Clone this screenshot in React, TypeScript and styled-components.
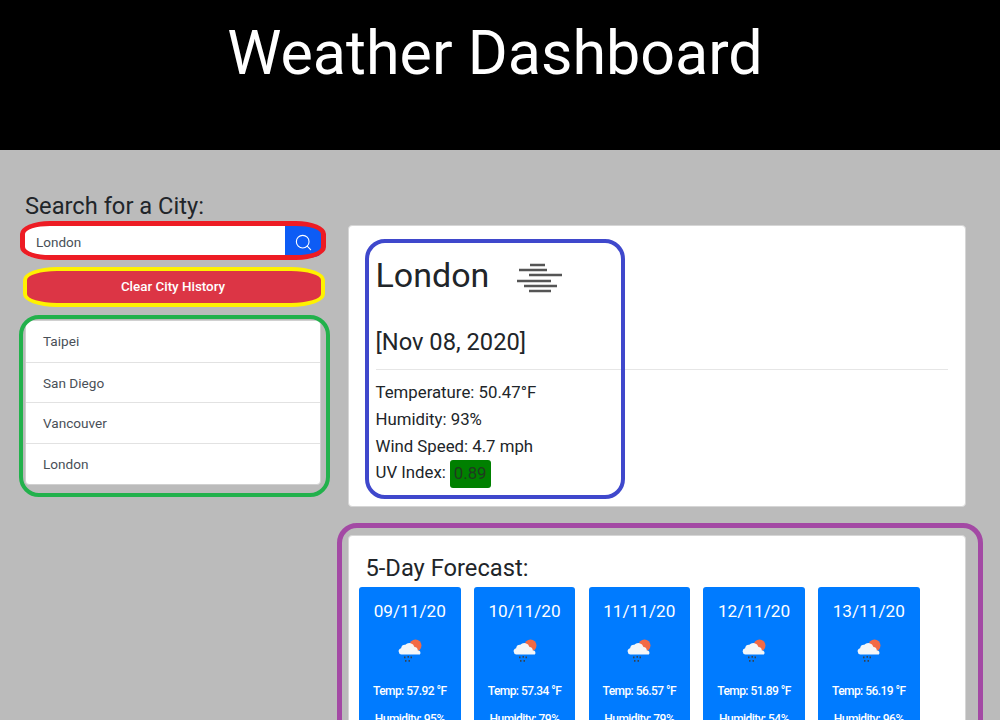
import React from "react";
import styled, { createGlobalStyle } from "styled-components";
import { Search } from "lucide-react";

const Global = createGlobalStyle`
  html, body { margin: 0; padding: 0; background: #bbbbbb; height: 720px; overflow: hidden; }
  body { font-family: Roboto, "Liberation Sans", sans-serif; color: #212529; }
  * { box-sizing: border-box; }
`;

const Header = styled.header`
  height: 150px;
  background: #000;
  color: #fff;
  text-align: center;
  padding: 16px 10px 0 0;
`;
const Title = styled.h1`
  margin: 0;
  font-size: 61px;
  line-height: 74px;
  font-weight: 400;
`;
const Main = styled.main`
  display: flex;
  height: 570px;
  overflow: hidden;
  padding: 0 34px 0 19px;
`;
const Sidebar = styled.aside`
  width: 302px;
  margin-right: 27px;
  padding: 42px 0 0 6px;
  display: flex;
  flex-direction: column;
`;
const SearchLabel = styled.h2`
  margin: 0;
  font-size: 23.7px;
  line-height: 28px;
  font-weight: 400;
  color: #212529;
`;
const Ring = styled.div<{ $color: string; $t: number; $r: number; $b: number; $l: number; $w: number; $radius: string }>`
  position: relative;
  &::after {
    content: "";
    position: absolute;
    top: ${(p) => -p.$t}px;
    right: ${(p) => -p.$r}px;
    bottom: ${(p) => -p.$b}px;
    left: ${(p) => -p.$l}px;
    border: ${(p) => p.$w}px solid ${(p) => p.$color};
    border-radius: ${(p) => p.$radius};
    pointer-events: none;
  }
`;
const SearchRing = styled(Ring)`
  margin-top: 6px;
  height: 32px;
`;
const SearchClip = styled.div`
  height: 100%;
  display: flex;
  overflow: hidden;
  border-radius: 14px / 5px;
`;
const SearchInput = styled.div`
  flex: 1;
  background: #fff;
  font-size: 13.5px;
  line-height: 32px;
  padding-left: 11px;
  color: #495057;
`;
const SearchButton = styled.div`
  width: 36px;
  background: #0d5cf5;
  color: #fff;
  display: flex;
  align-items: center;
  justify-content: center;
`;
const ClearRing = styled(Ring)`
  margin: 13px 0 0 2px;
  width: 295px;
  height: 32px;
`;
const ClearButton = styled.div`
  height: 100%;
  background: #dc3545;
  border-radius: 22px / 7px;
  color: #fff;
  font-size: 13.4px;
  font-weight: 500;
  line-height: 32px;
  text-align: center;
  padding-right: 3px;
`;
const ListRing = styled(Ring)`
  margin-top: 17px;
`;
const CityList = styled.ul`
  margin: 0;
  padding: 0 0 1px;
  list-style: none;
  background: #fff;
  border: 1px solid #d0d0d0;
  border-radius: 4px;
  overflow: hidden;
`;
const CityItem = styled.li`
  height: 40.5px;
  padding: 0 17px;
  font-size: 13.6px;
  line-height: 40px;
  color: #495057;
  & + & { border-top: 1px solid #e2e2e2; }
`;
const Content = styled.section`
  flex: 1;
  padding-top: 75px;
  display: flex;
  flex-direction: column;
  gap: 28px;
`;
const Card = styled.div`
  background: #fff;
  border: 1px solid #d6d6d6;
  border-radius: 4px;
`;
const TodayCard = styled(Card)`
  flex: none;
  height: 282px;
  padding: 14px 17px 0 26.5px;
`;
const TodayRing = styled(Ring)`
  display: flex;
  flex-direction: column;
`;
const CityRow = styled.div`
  display: flex;
  align-items: center;
  height: 70px;
`;
const CityName = styled.h2`
  margin: 0;
  font-size: 34px;
  line-height: 70px;
  font-weight: 400;
  color: #212529;
`;
const FogIcon = styled.svg`
  margin-left: 28px;
  margin-top: 6px;
`;
const DateLine = styled.div`
  font-size: 23.7px;
  line-height: 30px;
  margin-top: 17px;
  padding-bottom: 12px;
  border-bottom: 1px solid #e6e6e6;
`;
const Stats = styled.div`
  padding-top: 9px;
`;
const Stat = styled.p`
  margin: 0;
  height: 26.8px;
  font-size: 16.8px;
  line-height: 26.8px;
  color: #212529;
`;
const UvBadge = styled.span`
  display: inline-block;
  margin-left: 4px;
  padding: 0 4px;
  height: 28px;
  background: #008000;
  border-radius: 3px;
  color: #1f3b1f;
  line-height: 27px;
  vertical-align: -1px;
`;
const ForecastRing = styled(Ring)`
  flex: none;
`;
const ForecastCard = styled(Card)`
  height: 300px;
  padding: 18px 10px 0;
`;
const ForecastTitle = styled.h3`
  margin: 0 0 5px 6.5px;
  font-size: 23.7px;
  line-height: 28px;
  font-weight: 400;
`;
const Days = styled.div`
  display: flex;
  gap: 13.25px;
`;
const Day = styled.div`
  width: 101.5px;
  height: 220px;
  background: #007bff;
  border-radius: 3px;
  color: #fff;
  text-align: center;
  padding-top: 13px;
`;
const DayDate = styled.div`
  font-size: 17.2px;
  line-height: 22px;
`;
const WeatherIcon = styled.svg`
  display: block;
  margin: 17px auto 0;
`;
const DayText = styled.div`
  font-size: 12px;
  letter-spacing: -0.55px;
  font-weight: 500;
  line-height: 16px;
  margin-top: 20px;
  & + & { margin-top: 12px; }
`;

const cities = ["Taipei", "San Diego", "Vancouver", "London"];
const days = [
  ["09/11/20", "57.92", "95"],
  ["10/11/20", "57.34", "79"],
  ["11/11/20", "56.57", "79"],
  ["12/11/20", "51.89", "54"],
  ["13/11/20", "56.19", "96"],
];

const Fog = () => (
  <FogIcon width="46" height="30" viewBox="0 0 46 30" fill="none" stroke="#555" strokeWidth="2.4">
    <path d="M13 2h15M2 7h28M12 12h33M0 18h34M7 23h33M12 28h22" />
  </FogIcon>
);
const RainCloud = () => (
  <WeatherIcon width="24" height="24" viewBox="0 0 24 24">
    <circle cx="17.5" cy="6.5" r="6" fill="#f26a45" />
    <path d="M3.500 15.500a3.200 3.200 0 0 1-.4-6.300 4 4 0 0 1 4.200-3.400 5.400 5.400 0 0 1 9.200 2.200 3.600 3.600 0 0 1 3.300 3.600 2.300 2.300 0 0 1 2 3.900z" fill="#f4f6f8" />
    <path d="M6 17.500h1.500v1.800H6zM9.500 17h1.500v1.800H9.500zM12.500 17.500H14v1.800h-1.500zM7 21h1.500v1.800H7zM10.500 21H12v1.800h-1.500z" fill="#37424d" />
  </WeatherIcon>
);

export default function App() {
  return (
    <>
      <Global />
      <Header>
        <Title>Weather Dashboard</Title>
      </Header>
      <Main>
        <Sidebar>
          <SearchLabel>Search for a City:</SearchLabel>
          <SearchRing $color="#ed1c24" $t={5} $r={5} $b={2} $l={5} $w={5} $radius="30px / 13px">
            <SearchClip>
              <SearchInput>London</SearchInput>
              <SearchButton>
                <Search size={19} strokeWidth={1.4} />
              </SearchButton>
            </SearchClip>
          </SearchRing>
          <ClearRing $color="#fff200" $t={4} $r={3} $b={4} $l={4} $w={4} $radius="34px / 13px">
            <ClearButton>Clear City History</ClearButton>
          </ClearRing>
          <ListRing $color="#22b14c" $t={5} $r={9} $b={12} $l={6} $w={4} $radius="20px">
            <CityList>
              {cities.map((c) => (
                <CityItem key={c}>{c}</CityItem>
              ))}
            </CityList>
          </ListRing>
        </Sidebar>
        <Content>
          <TodayCard>
            <TodayRing $color="#3f48cc" $t={1} $r={-323} $b={13} $l={11} $w={4} $radius="20px">
              <CityRow>
                <CityName>London</CityName>
                <Fog />
              </CityRow>
              <DateLine>[Nov 08, 2020]</DateLine>
              <Stats>
                <Stat>Temperature: 50.47°F</Stat>
                <Stat>Humidity: 93%</Stat>
                <Stat>Wind Speed: 4.7 mph</Stat>
                <Stat>
                  UV Index:
                  <UvBadge>0.89</UvBadge>
                </Stat>
              </Stats>
            </TodayRing>
          </TodayCard>
          <ForecastRing $color="#a349a4" $t={12} $r={17} $b={0} $l={11} $w={5} $radius="20px">
            <ForecastCard>
              <ForecastTitle>5-Day Forecast:</ForecastTitle>
              <Days>
                {days.map(([d, t, h]) => (
                  <Day key={d}>
                    <DayDate>{d}</DayDate>
                    <RainCloud />
                    <DayText>Temp: {t} °F</DayText>
                    <DayText>Humidity: {h}%</DayText>
                  </Day>
                ))}
              </Days>
            </ForecastCard>
          </ForecastRing>
        </Content>
      </Main>
    </>
  );
}
